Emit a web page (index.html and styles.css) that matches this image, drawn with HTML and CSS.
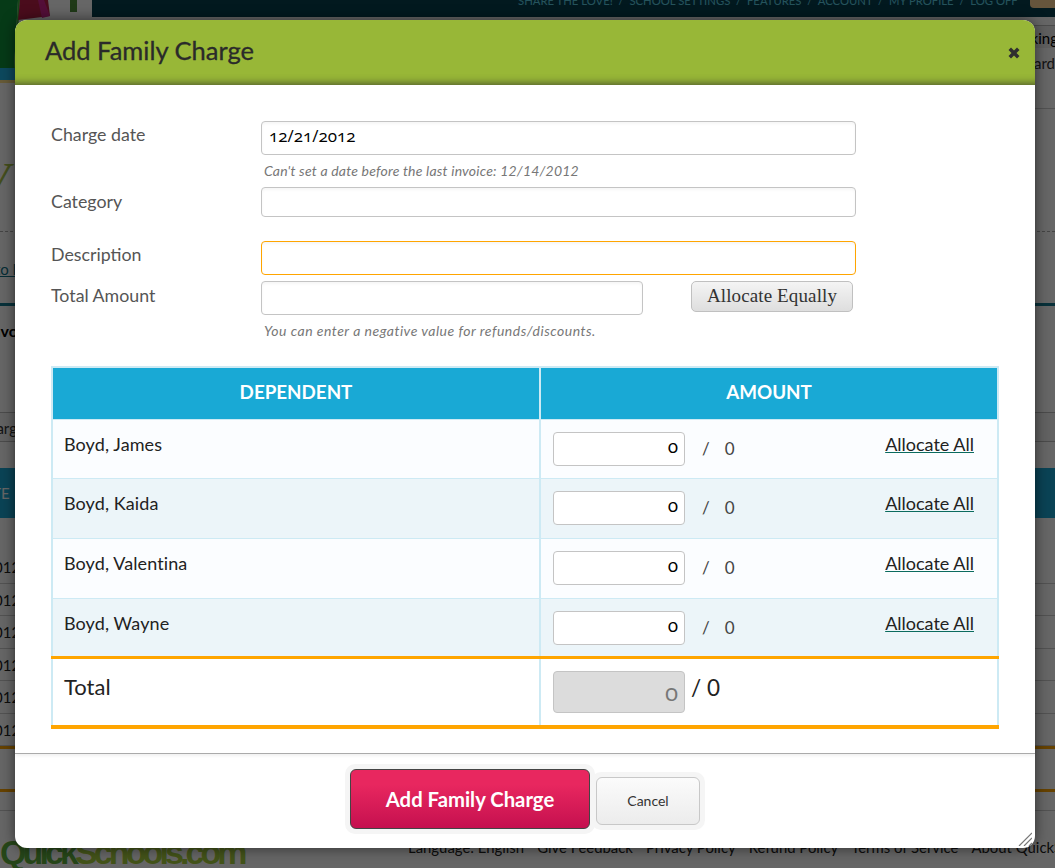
FILE: index.html
```html
<!DOCTYPE html>
<html>
  <head>
    <meta charset="UTF-8" />
    <title>Add Family Charge</title>
    <link rel="stylesheet" href="styles.css">
  </head>
  <body>
    <div class="page">
      <div class="head">
        <svg class="logo" width="92" height="110" viewBox="0 0 92 110">
          <rect width="92" height="110" fill="#fff" />
          <polygon points="0,0 18,0 14,68 0,68" fill="#10923a" />
          <polygon points="18,0 20,0 16,68 14,68" fill="#3fae3f" />
          <polygon points="20,0 48,0 50,16 18,20" fill="#b81f48" />
          <polygon points="44,0 50,16 42,18 38,0" fill="#d0258c" />
          <polygon points="0,68 15,68 15,80 0,80" fill="#22b5e8" />
          <rect y="80" width="15" height="3" fill="#ffe08a" />
          <rect x="70" y="0" width="7" height="12" fill="#4f8f3a" />
        </svg>
        <div class="head-main">
          <div class="topnav">SHARE THE LOVE! &nbsp;/&nbsp; SCHOOL SETTINGS &nbsp;/&nbsp; FEATURES &nbsp;/&nbsp; ACCOUNT &nbsp;/&nbsp; MY PROFILE &nbsp;/&nbsp; LOG OFF<span class="topnav-btn"></span></div>
          <div class="subnav-top"><span>Banking</span></div>
          <div class="subnav"><span>Standard</span></div>
        </div>
      </div>

      <div class="bg-content">
        <div class="bg-script">V</div>
        <div class="bg-link"><a href="#">to list</a></div>
        <div class="bg-name">Invoices</div>
        <div class="bg-tab">Charge</div>
        <div class="bg-thead">DATE</div>
        <div class="bg-row">12/01/2012</div>
        <div class="bg-row">12/03/2012</div>
        <div class="bg-row">11/01/2012</div>
        <div class="bg-row">12/07/2012</div>
        <div class="bg-row">12/10/2012</div>
        <div class="bg-row">12/14/2012</div>
        <div class="bg-total"></div>
      </div>

      <div class="bg-footer">
        <div class="bg-brand"><span class="bg-brand-dark">Quick</span>Schools.com</div>
        <div class="bg-links">
          <span>Language: English</span>
          <span>Give Feedback</span>
          <span>Privacy Policy</span>
          <span>Refund Policy</span>
          <span>Terms of Service</span>
          <span>About QuickSchools</span>
        </div>
      </div>
    </div>

    <div class="overlay"></div>

    <div class="modal">
      <div class="modal-header">
        <h1>Add Family Charge</h1>
        <svg class="close" width="12" height="12" viewBox="0 0 12 12">
          <path d="M0.5 3 L3 0.5 L6 3.5 L9 0.5 L11.5 3 L8.5 6 L11.5 9 L9 11.5 L6 8.5 L3 11.5 L0.5 9 L3.5 6 Z" fill="#2f2f2f" />
        </svg>
      </div>

      <div class="modal-body">
        <form class="charge-form">
          <label class="label-top" for="charge-date">Charge date</label>
          <input type="text" class="field field-date" id="charge-date" value="12/21/2012" />
          <p class="hint hint-date">Can't set a date before the last invoice: 12/14/2012</p>

          <label for="category">Category</label>
          <input type="text" class="field field-category" id="category" />

          <label class="label-top" for="description">Description</label>
          <input type="text" class="field field-date field-focus" id="description" />

          <label for="total-amount">Total Amount</label>
          <div class="amount-row">
            <input type="text" class="field field-amount" id="total-amount" />
            <button type="button" class="btn-allocate">Allocate Equally</button>
          </div>
          <p class="hint hint-amount">You can enter a negative value for refunds/discounts.</p>
        </form>

        <table class="alloc">
          <thead>
            <tr>
              <th class="col-name">DEPENDENT</th>
              <th>AMOUNT</th>
            </tr>
          </thead>
          <tbody>
            <tr>
              <td class="name">Boyd, James</td>
              <td>
                <div class="amount-cell">
                  <input type="text" class="num" value="0" />
                  <span class="of">/</span><span class="of-val">0</span>
                  <a class="allocate-all" href="#">Allocate All</a>
                </div>
              </td>
            </tr>
            <tr class="alt">
              <td class="name">Boyd, Kaida</td>
              <td>
                <div class="amount-cell">
                  <input type="text" class="num" value="0" />
                  <span class="of">/</span><span class="of-val">0</span>
                  <a class="allocate-all" href="#">Allocate All</a>
                </div>
              </td>
            </tr>
            <tr>
              <td class="name">Boyd, Valentina</td>
              <td>
                <div class="amount-cell">
                  <input type="text" class="num" value="0" />
                  <span class="of">/</span><span class="of-val">0</span>
                  <a class="allocate-all" href="#">Allocate All</a>
                </div>
              </td>
            </tr>
            <tr class="alt">
              <td class="name">Boyd, Wayne</td>
              <td>
                <div class="amount-cell">
                  <input type="text" class="num" value="0" />
                  <span class="of">/</span><span class="of-val">0</span>
                  <a class="allocate-all" href="#">Allocate All</a>
                </div>
              </td>
            </tr>
          </tbody>
          <tfoot>
            <tr>
              <td class="total-label">Total</td>
              <td>
                <div class="total-cell">
                  <input type="text" class="num num-total" value="0" disabled />
                  <span class="total-of">/ 0</span>
                </div>
              </td>
            </tr>
          </tfoot>
        </table>
      </div>

      <div class="modal-footer">
        <span class="halo"><button type="button" class="btn-add">Add Family Charge</button></span>
        <span class="halo halo-cancel"><button type="button" class="btn-cancel">Cancel</button></span>
      </div>

      <svg class="grip" width="14" height="14" viewBox="0 0 14 14">
        <path d="M1 14 L14 1 M6 14 L14 6 M11 14 L14 11" stroke="#777" stroke-width="1.2" fill="none" />
      </svg>
    </div>
  </body>
</html>
```

FILE: styles.css
```css
* {
  box-sizing: border-box;
}
html,
body {
  margin: 0;
  height: 868px;
  overflow: hidden;
}
body {
  font-family: Lato, "Liberation Sans", sans-serif;
  color: #222;
  background: #fff;
}

/* page behind the dialog */
.page {
  width: 1055px;
  height: 868px;
  overflow: hidden;
}
.head {
  display: flex;
  height: 110px;
}
.logo {
  flex: none;
}
.head-main {
  flex: 1;
  min-width: 0;
  border-bottom: 1px solid #ccc;
  height: 109px;
}
.topnav {
  height: 17px;
  background: #07404f;
  color: #5ecfe6;
  font-size: 11.3px;
  line-height: 2px;
  padding-left: 426px;
  white-space: nowrap;
  overflow: hidden;
  position: relative;
}
.topnav-btn {
  position: absolute;
  left: 938px;
  top: 0;
  width: 40px;
  height: 8px;
  background: #ffd496;
  border-radius: 0 0 4px 4px;
}
.subnav-top {
  margin-top: 8px;
  height: 23px;
  background: #eee;
  border-top: 1px solid #bbb;
  text-align: right;
  font-size: 15px;
  line-height: 24px;
  color: #000;
  white-space: nowrap;
  overflow: hidden;
}
.subnav {
  height: 60px;
  text-align: right;
  font-size: 15px;
  line-height: 30px;
  color: #333;
  white-space: nowrap;
  overflow: hidden;
}
.subnav-top span {
  display: inline-block;
  margin-right: -3px;
}
.bg-content {
  height: 700px;
  font-size: 15px;
  color: #111;
  white-space: nowrap;
}
.bg-script {
  height: 122px;
  padding-top: 50px;
  margin-left: -20px;
  font-family: "Liberation Serif", serif;
  font-style: italic;
  font-size: 48px;
  line-height: 40px;
  color: #a9c24a;
  border-bottom: 1px dashed #aaa;
}
.bg-link {
  height: 74px;
  padding-top: 28px;
  margin-left: -5px;
  border-bottom: 3px solid #157a92;
}
.bg-link a {
  color: #0f7186;
}
.bg-name {
  height: 106px;
  padding-top: 15px;
  margin-left: -13px;
  font-size: 16px;
  font-weight: 700;
  color: #000;
}
.bg-tab {
  height: 30px;
  margin-left: -22px;
  line-height: 30px;
  background: #f4f4f4;
  border-top: 1px solid #bbb;
  border-bottom: 1px solid #bbb;
  color: #333;
}
.bg-thead {
  margin-top: 26px;
  height: 50px;
  line-height: 50px;
  margin-left: -28px;
  background: #19a9d5;
  color: #fff;
}
.bg-row {
  height: 32.5px;
  line-height: 32px;
  margin-left: -63px;
  border-bottom: 1px solid #ccc;
  color: #222;
}
.bg-thead + .bg-row {
  margin-top: 33px;
}
.bg-total {
  height: 46px;
  border-top: 3px solid #ffa500;
  border-bottom: 3px solid #ffa500;
}
.bg-footer {
  display: flex;
  white-space: nowrap;
  border-top: 1px solid #ccc;
  height: 58px;
}
.bg-brand {
  width: 246px;
  flex: none;
  font-family: "Liberation Sans", sans-serif;
  font-weight: 700;
  font-size: 34px;
  letter-spacing: -3.9px;
  line-height: 40px;
  padding-top: 21px;
  color: #a8d040;
}
.bg-brand-dark {
  color: #5fb040;
}
.bg-links {
  display: flex;
  gap: 13px;
  padding: 27px 0 0 162px;
  font-size: 14.9px;
  color: #222;
}

.overlay {
  position: absolute;
  inset: 0;
  background: rgba(0, 0, 0, 0.6);
}

/* dialog */
.modal {
  position: absolute;
  left: 15px;
  top: 20px;
  width: 1020px;
  height: 828px;
  background: #fff;
  border-radius: 12px;
  box-shadow: 0 0 14px rgba(0, 0, 0, 0.55);
}
.modal-header {
  height: 65px;
  background: #98b737;
  border-radius: 12px 12px 0 0;
  box-shadow: inset 0 -9px 8px -8px rgba(40, 40, 40, 0.75);
  display: flex;
  align-items: center;
  justify-content: space-between;
  padding: 0 15px 0 30px;
}
.modal-header h1 {
  margin: 0 0 5px;
  font-size: 25.5px;
  font-weight: 400;
  color: #2a2a2a;
  -webkit-text-stroke: 0.3px #2a2a2a;
}
.close {
  margin-top: 1px;
}
.modal-body {
  height: 669px;
  padding: 36px 36px 0;
  border-bottom: 1px solid #aaa;
  box-shadow: 0 2px 3px rgba(0, 0, 0, 0.06);
}
.charge-form {
  display: grid;
  grid-template-columns: 210px 595px;
  font-size: 17.8px;
  color: #555;
}
.charge-form label {
  padding-top: 4px;
  line-height: 20px;
}
.charge-form .label-top {
  padding-top: 3px;
}
.field {
  display: block;
  width: 100%;
  border: 1px solid #c4c4c4;
  border-radius: 4px;
  background: #fff;
  box-shadow: inset 0 2px 3px rgba(0, 0, 0, 0.04);
  padding: 0 7px;
  outline: none;
}
.field-date {
  height: 34px;
  padding-bottom: 6px;
  font-family: "Open Sans", serif;
  font-feature-settings: "onum";
  font-size: 17px;
  color: #000;
}
.field-category {
  height: 30px;
  margin-bottom: 24px;
}
.field-focus {
  border-color: #ffa500;
  margin-bottom: 6px;
}
.hint {
  grid-column: 2;
  margin: 0;
  padding-left: 3px;
  font-size: 14px;
  letter-spacing: 0.2px;
  font-style: italic;
  color: #777;
}
.hint-date {
  height: 32px;
  line-height: 32px;
}
.hint-amount {
  height: 32px;
  line-height: 32px;
  margin-bottom: 19px;
  letter-spacing: 0.5px;
}
.amount-row {
  display: flex;
  align-items: flex-start;
  justify-content: space-between;
  padding-right: 3px;
}
.field-amount {
  width: 382px;
  height: 34px;
}
.btn-allocate {
  width: 162px;
  height: 31px;
  padding: 0 0 2px;
  font-family: "Liberation Serif", serif;
  font-size: 19px;
  letter-spacing: 0.12px;
  color: #333;
  border: 1px solid #c0c0c0;
  border-radius: 5px;
  background: linear-gradient(#f4f4f4, #dedede);
}
.alloc {
  border-collapse: collapse;
  width: 948px;
  table-layout: fixed;
}
.alloc th {
  height: 52px;
  padding: 0 0 3px;
  background: #19a9d5;
  border: 2px solid #cdeaf4;
  border-bottom: 0;
  font-size: 18.8px;
  font-weight: 700;
  color: #fff;
}
.col-name {
  width: 488px;
}
.alloc td {
  padding: 0;
  border: 2px solid #cdeaf4;
  border-top-width: 1px;
  border-bottom-width: 1px;
  background: #fbfdff;
  height: 60px;
  vertical-align: top;
}
.alloc tbody tr:first-child td {
  height: 59px;
}
.alloc tbody tr:last-child td {
  height: 59px;
}
.alloc .alt td {
  background: #ecf5f9;
}
.alloc td.name {
  padding: 13px 0 0 11px;
  font-size: 18px;
  letter-spacing: 0.1px;
  line-height: 22px;
}
.amount-cell {
  display: flex;
  align-items: flex-start;
  padding: 12px 23px 0 12px;
}
.num {
  width: 132px;
  height: 34px;
  padding: 0 6px 6px;
  border: 1px solid #c4c4c4;
  border-radius: 4px;
  background: #fff;
  text-align: right;
  font-family: "Open Sans", serif;
  font-feature-settings: "onum";
  font-size: 19px;
  color: #000;
}
.of {
  margin-left: 17px;
  line-height: 34px;
  font-size: 17px;
  color: #444;
}
.of-val {
  margin-left: 15px;
  line-height: 34px;
  font-size: 17px;
  color: #444;
}
.allocate-all {
  margin-left: auto;
  margin-top: 1px;
  font-size: 18px;
  line-height: 22px;
  color: #222;
  text-decoration: underline;
  text-decoration-color: #0b6b5e;
}
.alloc tfoot td {
  height: 70px;
  background: #fff;
  border-top: 3px solid #ffa500;
  border-bottom: 4px solid #ffa500;
}
.alloc td.total-label {
  padding: 14px 0 0 11px;
  font-size: 22px;
  line-height: 28px;
}
.total-cell {
  display: flex;
  align-items: flex-start;
  gap: 6px;
  padding: 12px 0 0 12px;
  font-size: 22.5px;
  line-height: 28px;
}
.total-of {
  margin-top: 3px;
}
.num-total {
  height: 42px;
  padding-bottom: 1px;
  background: #dcdcdc;
  font-size: 24px;
  color: #777;
}
.modal-footer {
  display: flex;
  align-items: center;
  justify-content: center;
  gap: 6px;
  height: 90px;
}
.halo {
  display: block;
  padding: 5px;
  background: #f5f5f5;
  border-radius: 10px;
  margin: 0 -5px;
}
.halo-cancel {
  margin-top: 4px;
}
.halo button {
  display: block;
  font-family: Lato, "Liberation Sans", sans-serif;
}
.btn-add {
  width: 240px;
  height: 60px;
  padding: 0;
  border: 1px solid #444;
  border-radius: 6px;
  background: linear-gradient(#e8275f 25%, #c5104f);
  color: #fff;
  font-size: 20.3px;
  font-weight: 700;
}
.btn-cancel {
  width: 104px;
  height: 48px;
  padding: 0 0 2px;
  border: 1px solid #c8c8c8;
  border-radius: 6px;
  background: linear-gradient(#fbfbfb, #ececec);
  color: #333;
  font-size: 14px;
}
.grip {
  position: absolute;
  right: 3px;
  bottom: 2px;
}
```
